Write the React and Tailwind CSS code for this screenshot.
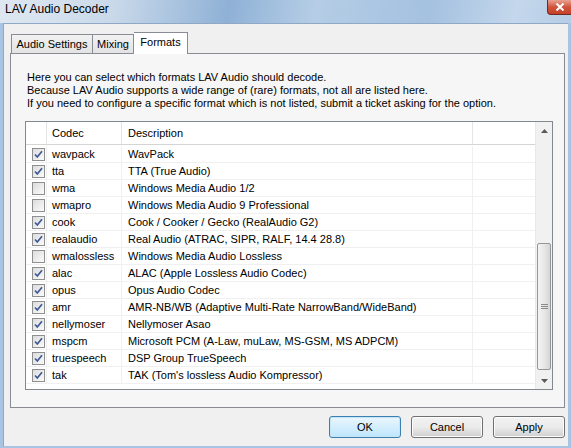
import React from "react";

const rows = [
  ["wavpack", "WavPack", true],
  ["tta", "TTA (True Audio)", true],
  ["wma", "Windows Media Audio 1/2", false],
  ["wmapro", "Windows Media Audio 9 Professional", false],
  ["cook", "Cook / Cooker / Gecko (RealAudio G2)", true],
  ["realaudio", "Real Audio (ATRAC, SIPR, RALF, 14.4 28.8)", true],
  ["wmalossless", "Windows Media Audio Lossless", false],
  ["alac", "ALAC (Apple Lossless Audio Codec)", true],
  ["opus", "Opus Audio Codec", true],
  ["amr", "AMR-NB/WB (Adaptive Multi-Rate NarrowBand/WideBand)", true],
  ["nellymoser", "Nellymoser Asao", true],
  ["mspcm", "Microsoft PCM (A-Law, muLaw, MS-GSM, MS ADPCM)", true],
  ["truespeech", "DSP Group TrueSpeech", true],
  ["tak", "TAK (Tom's lossless Audio Kompressor)", true],
];

function Check({ on }) {
  return (
    <div className="w-[13px] h-[13px] border border-[#8e8f8f] bg-gradient-to-br from-[#dcdcdc] to-[#fbfbfb] flex items-center justify-center">
      {on && (
        <svg width="9" height="9" viewBox="0 0 9 9">
          <path d="M1 4.5 L3.3 7 L8 1.3" fill="none" stroke="#3d5a98" strokeWidth="1.7" />
        </svg>
      )}
    </div>
  );
}

function Btn({ children, def }) {
  return (
    <div
      className={
        "w-[72px] h-[22px] rounded-[3px] border flex items-center justify-center text-black " +
        (def
          ? "border-[#3c7fb1] bg-gradient-to-b from-[#eaf6fd] to-[#bee6fd] shadow-[inset_0_0_0_1px_#c4e5f6]"
          : "border-[#707070] bg-gradient-to-b from-[#f2f2f2] via-[#ebebeb] to-[#cfcfcf] shadow-[inset_0_0_0_1px_#fcfcfc]")
      }
    >
      {children}
    </div>
  );
}

export default function App() {
  return (
    <div
      className="w-[571px] h-[448px] overflow-hidden flex flex-col bg-[#a9c4e2] text-[11px] leading-[13px] text-black"
      style={{ fontFamily: '"Liberation Sans", Arial, sans-serif' }}
    >
      {/* title bar */}
      <div className="h-[23px] shrink-0 relative bg-[linear-gradient(100deg,#dfe8f1_0%,#c9d9ea_20%,#8fb1d6_40%,#b5cde6_55%,#a4c1e0_75%,#c4d7ec_90%,#b6cde6_100%)]">
        <div className="absolute left-[5px] top-[3px] text-[12px] text-black">LAV Audio Decoder</div>
        <div className="absolute right-0 top-0 w-[24px] h-[15px] rounded-bl-[4px] border border-[#6d2b21] border-t-0 border-r-0 bg-gradient-to-b from-[#e8a192] via-[#d0543b] to-[#c7402a] flex items-center justify-center">
          <svg width="10" height="8" viewBox="0 0 10 8">
            <path d="M1.5 0.5 L8.5 7.5 M8.5 0.5 L1.5 7.5" stroke="white" strokeWidth="2" />
          </svg>
        </div>
      </div>
      {/* body */}
      <div className="flex-1 mx-[3px] mb-[2px] border-t border-l border-[#8ea8c5] bg-[#f0f0f0] flex flex-col pl-[6px] pr-[3px] pt-[8px]">
        {/* tabs */}
        <div className="h-[21px] flex items-end pl-[1px] relative z-10">
          <div className="w-[82px] h-[19px] border border-[#898c95] border-b-0 bg-gradient-to-b from-[#f2f2f2] to-[#e3e3e3] flex items-center justify-center">Audio Settings</div>
          <div className="w-[41px] h-[19px] border border-l-0 border-[#898c95] border-b-0 bg-gradient-to-b from-[#f2f2f2] to-[#e3e3e3] flex items-center justify-center">Mixing</div>
          <div className="w-[54px] h-[22px] -mb-px border border-l-0 border-[#898c95] border-b-0 bg-white flex items-center justify-center pb-[3px]">Formats</div>
        </div>
        {/* panel */}
        <div className="w-[555px] h-[355px] border border-[#898c95] bg-[#f6f6f6] flex flex-col pl-[14px] pt-[17px]">
          <div className="pl-[2px]">
            <div>Here you can select which formats LAV Audio should decode.</div>
            <div>Because LAV Audio supports a wide range of (rare) formats, not all are listed here.</div>
            <div>If you need to configure a specific format which is not listed, submit a ticket asking for the option.</div>
          </div>
          {/* list */}
          <div className="mt-[11px] w-[528px] h-[269px] border border-[#828790] bg-white flex">
            <div className="flex-1 flex flex-col">
              <div className="h-[23px] flex border-b border-[#d5d5d5] bg-white">
                <div className="w-[21px] border-r border-[#e5e5e5]" />
                <div className="w-[75px] border-r border-[#e5e5e5] pl-[5px] flex items-center">Codec</div>
                <div className="w-[351px] border-r border-[#e5e5e5] pl-[6px] flex items-center">Description</div>
                <div className="flex-1" />
              </div>
              <div className="flex-1 flex flex-col pt-px">
                {rows.map(([c, d, on]) => (
                  <div key={c} className="h-[17px] flex border-b border-[#f0f0f0]">
                    <div className="w-[21px] border-r border-[#f0f0f0] flex items-center justify-end pr-[1px]">
                      <Check on={on} />
                    </div>
                    <div className="w-[75px] border-r border-[#f0f0f0] pl-[5px] flex items-center pt-px">{c}</div>
                    <div className="w-[351px] border-r border-[#f0f0f0] pl-[6px] flex items-center whitespace-nowrap pt-px">{d}</div>
                    <div className="flex-1" />
                  </div>
                ))}
              </div>
            </div>
            {/* scrollbar */}
            <div className="w-[17px] bg-[#f1f1f1] border-l border-[#e8e8e8] flex flex-col">
              <div className="h-[17px] flex items-center justify-center">
                <svg width="7" height="4" viewBox="0 0 7 4"><path d="M0 4 L3.5 0 L7 4 Z" fill="#5a5a5a" /></svg>
              </div>
              <div className="h-[104px]" />
              <div className="h-[127px] mx-px rounded-[2px] border border-[#979797] bg-gradient-to-r from-[#f3f3f3] via-[#e8e8e8] to-[#d6d6d6] flex items-center justify-center">
                <svg width="7" height="7" viewBox="0 0 7 7">
                  <path d="M0 1.5 H7 M0 3.5 H7 M0 5.5 H7" stroke="#8a8a8a" strokeWidth="1" />
                </svg>
              </div>
              <div className="flex-1" />
              <div className="h-[17px] flex items-center justify-center">
                <svg width="7" height="4" viewBox="0 0 7 4"><path d="M0 0 L3.5 4 L7 0 Z" fill="#5a5a5a" /></svg>
              </div>
            </div>
          </div>
        </div>
        {/* buttons */}
        <div className="flex justify-end gap-[10px] mt-[8px]">
          <Btn def>OK</Btn>
          <Btn>Cancel</Btn>
          <Btn>Apply</Btn>
        </div>
      </div>
    </div>
  );
}
